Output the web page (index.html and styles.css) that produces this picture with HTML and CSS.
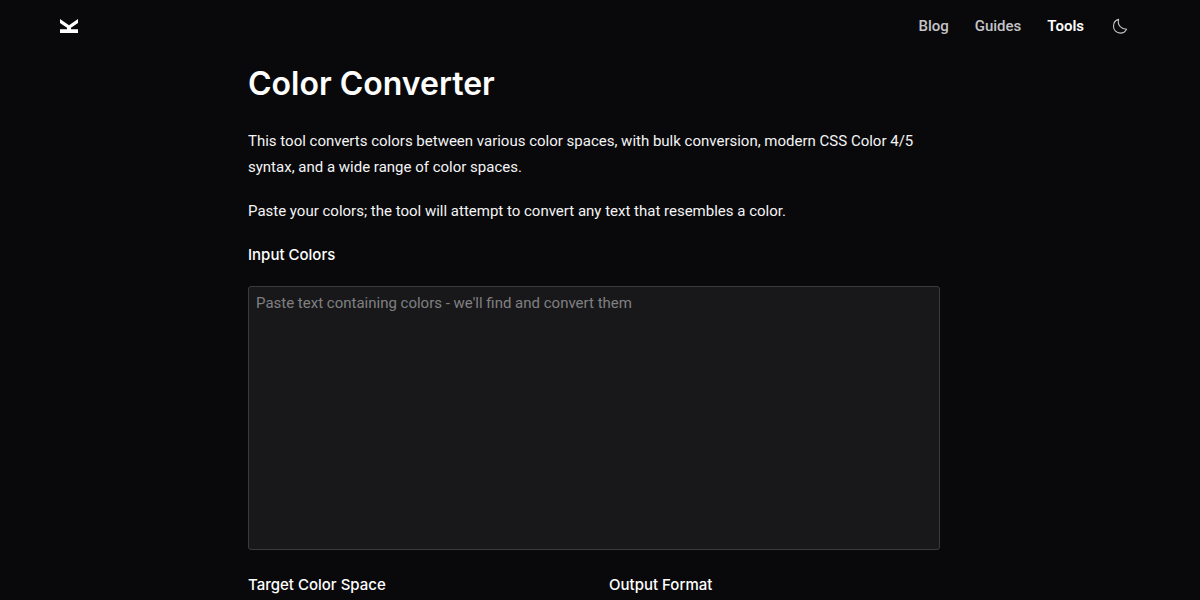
FILE: index.html
```html
<!doctype html>
<html lang="en">
<head>
<meta charset="utf-8">
<meta name="viewport" content="width=device-width, initial-scale=1">
<title>Color Converter</title>
<link rel="stylesheet" href="styles.css">
</head>

<body>
<header class="site-header">
  <a class="logo" href="#">
    <svg width="18" height="14" viewBox="0 0 18 14" fill="currentColor" aria-hidden="true">
      <path d="M0 10.2H7V8.8L0 4V0L9 6.3L18 0V4L11 8.8V10.2H18V14H0Z" />
    </svg>
  </a>
  <nav class="site-nav">
    <a href="#">Blog</a>
    <a href="#">Guides</a>
    <a href="#" class="active">Tools</a>
    <button type="button" class="theme-toggle">
      <svg width="16" height="16" viewBox="0 0 16 16" fill="none" stroke="currentColor" stroke-width="1.1" stroke-linejoin="round" aria-hidden="true">
        <path d="M6.6 1.4C3.5 2.2 1.5 4.8 1.5 8.2c0 4 3 6.9 6.8 6.9 2.8 0 5.1-1.5 6.3-3.9C9.8 11 5 7.7 6.6 1.4Z" />
      </svg>
    </button>
  </nav>
</header>

<main class="content">
  <h1>Color Converter</h1>
  <p>This tool converts colors between various color spaces, with bulk conversion, modern CSS Color 4/5 syntax, and a wide range of color spaces.</p>
  <p>Paste your colors; the tool will attempt to convert any text that resembles a color.</p>
  <form>
    <label for="input-colors">Input Colors</label>
    <textarea id="input-colors" placeholder="Paste text containing colors - we'll find and convert them"></textarea>
    <div class="options">
      <div class="field">
        <label for="color-space">Target Color Space</label>
        <select id="color-space"></select>
      </div>
      <div class="field">
        <label for="output-format">Output Format</label>
        <select id="output-format"></select>
      </div>
    </div>
  </form>
</main>
</body>
</html>
```
FILE: styles.css
```css
* {
	box-sizing: border-box;
}
body {
	margin: 0;
	padding-right: 12px;
	background: #09090b;
	color: #f4f4f5;
	font-family: Roboto, "Liberation Sans", sans-serif;
	font-size: 15px;
	line-height: 26px;
}
.site-header {
	display: flex;
	align-items: center;
	justify-content: space-between;
	height: 51px;
	padding: 0 60px;
}
.logo {
	display: flex;
	color: #fff;
}
.site-nav {
	display: flex;
	align-items: center;
	gap: 26px;
}
.site-nav a {
	color: #c4c4c8;
	font-weight: 500;
	text-decoration: none;
}
.site-nav a.active {
	color: #fff;
	font-weight: 600;
}
.theme-toggle {
	display: flex;
	margin-left: 2px;
	padding: 0;
	border: 0;
	background: none;
	color: #c4c4c8;
}
.content {
	max-width: 692px;
	margin: 0 auto;
}
h1, label {
	color: #fff;
	font-family: Inter, "Liberation Sans", sans-serif;
}
h1 {
	margin: 13px 0 24px;
	font-size: 32px;
	font-weight: 600;
	line-height: 40px;
}
p {
	margin: 0 0 18px;
}
label {
	display: block;
	margin-bottom: 18px;
	font-weight: 500;
}
textarea {
	display: block;
	width: 100%;
	height: 264px;
	margin-bottom: 22px;
	padding: 3px 7px;
	border: 1px solid #3b3b3d;
	border-radius: 3px;
	background: #18181a;
	color: #f4f4f5;
	font: inherit;
	resize: none;
}
textarea::placeholder {
	color: #808083;
}
.options {
	display: grid;
	grid-template-columns: 1fr 1fr;
	gap: 30px;
}
select {
	width: 100%;
	height: 36px;
	border: 1px solid #3b3b3d;
	border-radius: 3px;
	background: #18181a;
	color: #f4f4f5;
	font: inherit;
}
```
